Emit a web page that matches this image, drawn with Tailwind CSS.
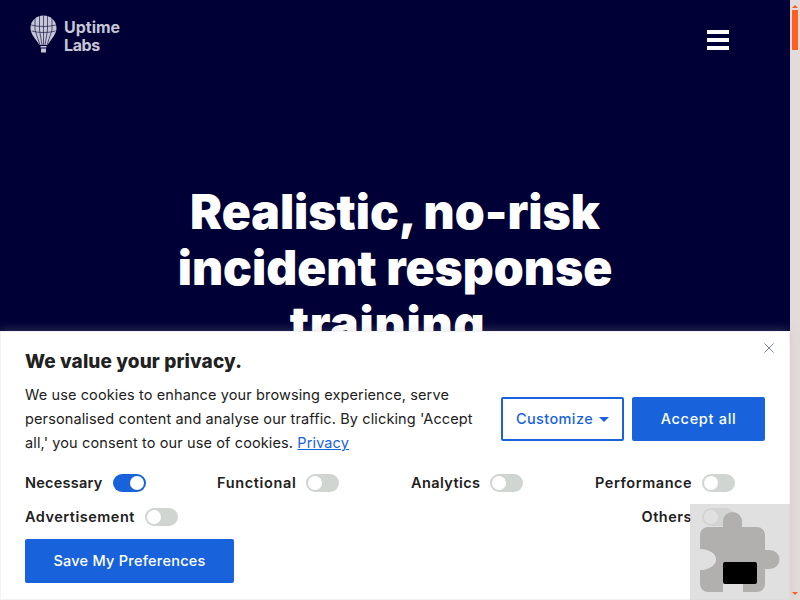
<!DOCTYPE html>
<html lang="en">
<head>
  <meta charset="UTF-8">
  <title>Uptime Labs</title>
  <script src="https://cdn.jsdelivr.net/npm/@tailwindcss/browser@4"></script>
</head>
<body class="font-['Inter',sans-serif] overflow-hidden">
  <div class="relative flex w-[800px] h-[600px] overflow-hidden">
    <!-- Page -->
    <main class="w-[790px] h-[600px] bg-[#000036] overflow-hidden">
      <header class="flex justify-between items-start pl-[30px] pr-[61px] pt-[15px]">
        <div class="flex items-start gap-[7px]">
          <svg width="27" height="38" viewBox="0 0 27 38">
            <path d="M13.500 .5C6 .5 .5 6 .5 13c0 5 3 8.500 5.500 12l3.500 5h8l3.500-5c2.500-3.500 5.500-7 5.500-12C26.500 6 21 .5 13.500 .5z" fill="#c6c6d6"/>
            <path d="M5 3v12l5 15M9.500 1v14l2.500 15M13.500 .5V30M17.500 1v14l-2.500 15M22 3v12l-5 15M1 10c7 2 18 2 25 0M1.500 16c7 2 17 2 24 0" fill="none" stroke="#000036" stroke-width="1" opacity=".6"/>
            <rect x="10.500" y="31" width="6" height="1.500" fill="#c6c6d6"/>
            <rect x="11" y="33.500" width="5" height="4" fill="#c6c6d6"/>
          </svg>
          <div class="text-[16px] leading-[18px] font-bold text-[#c6c6d6] mt-[3px]">
            <div>Uptime</div>
            <div class="tracking-[-0.4px]">Labs</div>
          </div>
        </div>
        <button class="flex flex-col gap-[4px] mt-[15px]">
          <span class="block w-[22px] h-[4px] bg-white"></span>
          <span class="block w-[22px] h-[4px] bg-white"></span>
          <span class="block w-[22px] h-[4px] bg-white"></span>
        </button>
      </header>
      <h1 class="mt-[130px] text-center text-[48px] leading-[56px] font-black text-white">
        Realistic, no-risk<br>incident response<br><span class="inline-block pr-[15px] tracking-[0.8px]">training</span>
      </h1>
    </main>

    <!-- Scrollbar -->
    <aside class="relative w-[10px] h-[600px] bg-[#e3dbd9] flex flex-col items-center">
      <span class="mt-[5px] w-0 h-0 border-x-[3px] border-x-transparent border-b-[3px] border-b-[#ff5a1f]"></span>
      <span class="mt-[2px] w-[6px] h-[40px] bg-[#ff5f1f]"></span>
      <span class="mt-auto mb-[5px] w-0 h-0 border-x-[3px] border-x-transparent border-t-[3px] border-t-[#ff5a1f]"></span>
    </aside>

    <!-- Cookie banner -->
    <section class="absolute left-0 bottom-0 w-[790px] h-[269px] bg-white border border-[#f2f2f2] shadow-[0_-1px_10px_rgba(172,171,171,0.3)] text-[#212121] pl-[24px] pt-[17px]">
      <svg class="absolute left-[763px] top-[11px]" width="10" height="10" viewBox="0 0 10 10"><path d="M.5.500l9 9M9.500.500l-9 9" stroke="#7d8594" stroke-width="1" fill="none"/></svg>
      <h2 class="text-[19px] leading-[26px] font-extrabold tracking-[0.1px]">We value your privacy.</h2>
      <div class="flex mt-[8px]">
        <p class="w-[460px] text-[14.500px] leading-[24px] tracking-[0.12px]">We use cookies to enhance your browsing experience, serve personalised content and analyse our traffic. By clicking 'Accept all,' you consent to our use of cookies. <a href="#" class="text-[#1863dc] underline">Privacy</a></p>
        <div class="flex gap-[8px] ml-[16px] mt-[14px]">
          <button class="flex items-center justify-center gap-[6px] w-[123px] h-[44px] border-2 border-[#1863dc] rounded-[2px] text-[#1863dc] text-[14.500px] font-medium tracking-[0.4px]">Customize <span class="w-0 h-0 border-x-[5px] border-x-transparent border-t-[5px] border-t-[#1863dc]"></span></button>
          <button class="w-[133px] h-[44px] bg-[#1863dc] rounded-[2px] text-white text-[14.500px] font-medium tracking-[0.7px]">Accept all</button>
        </div>
      </div>
      <div class="flex mt-[18px] h-[20px] text-[14.500px] font-semibold tracking-[0.55px]">
        <div class="w-[192px] flex items-center gap-[10px] tracking-[0.25px]">Necessary
          <span class="relative w-[33px] h-[18px] rounded-full bg-[#1863dc]"><span class="absolute right-[2px] top-[2px] w-[14px] h-[14px] rounded-full bg-white"></span></span>
        </div>
        <div class="w-[194px] flex items-center gap-[10px] tracking-[0.65px]">Functional
          <span class="relative w-[33px] h-[18px] rounded-full bg-[#d0d5d2]"><span class="absolute left-[2px] top-[2px] w-[14px] h-[14px] rounded-full bg-white"></span></span>
        </div>
        <div class="w-[184px] flex items-center gap-[10px] tracking-[0.4px]">Analytics
          <span class="relative w-[33px] h-[18px] rounded-full bg-[#d0d5d2]"><span class="absolute left-[2px] top-[2px] w-[14px] h-[14px] rounded-full bg-white"></span></span>
        </div>
        <div class="w-[140px] flex items-center justify-end gap-[10px]">Performance
          <span class="relative w-[33px] h-[18px] rounded-full bg-[#d0d5d2]"><span class="absolute left-[2px] top-[2px] w-[14px] h-[14px] rounded-full bg-white"></span></span>
        </div>
      </div>
      <div class="flex justify-between w-[710px] mt-[14px] h-[20px] text-[14.500px] font-semibold tracking-[0.5px]">
        <div class="flex items-center gap-[10px]">Advertisement
          <span class="relative w-[33px] h-[18px] rounded-full bg-[#d0d5d2]"><span class="absolute left-[2px] top-[2px] w-[14px] h-[14px] rounded-full bg-white"></span></span>
        </div>
        <div class="flex items-center gap-[10px]">Others
          <span class="relative w-[33px] h-[18px] rounded-full bg-[#d0d5d2]"><span class="absolute left-[2px] top-[2px] w-[14px] h-[14px] rounded-full bg-white"></span></span>
        </div>
      </div>
      <button class="block mt-[12px] w-[209px] h-[44px] bg-[#1863dc] rounded-[2px] text-white text-[14.500px] font-medium tracking-[0.25px]">Save My Preferences</button>
    </section>

    <!-- Plugin placeholder -->
    <div class="absolute left-[690px] top-[504px] w-[100px] h-[96px] bg-[#d3d3d3]/70">
      <svg class="absolute inset-0" width="100" height="96" viewBox="0 0 100 96">
        <path d="M10 31a8 8 0 0 1 8-8h15v-5.500a9.500 9.500 0 0 1 19 0v5.500h15a8 8 0 0 1 8 8v15h5a9.500 9.500 0 0 1 0 19h-5v15a8 8 0 0 1-8 8h-14v-17h-20v17h-15a8 8 0 0 1-8-8v-14a16 10.500 0 0 0 0-21z" fill="#b2afaf"/>
      </svg>
      <span class="absolute left-[33px] top-[58px] w-[34px] h-[22px] rounded-[2px] bg-black"></span>
    </div>
  </div>
</body>
</html>
